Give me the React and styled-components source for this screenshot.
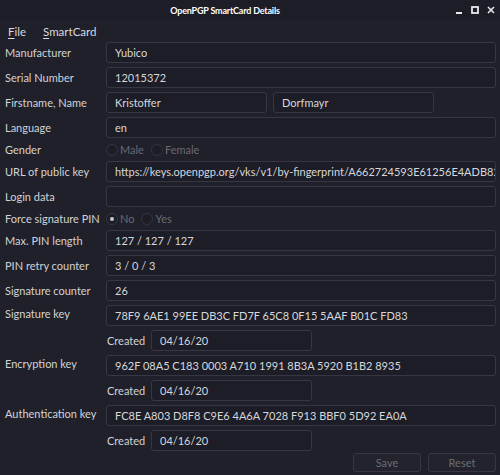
import React from "react";
import styled, { createGlobalStyle } from "styled-components";

const Global = createGlobalStyle`
  html, body { margin: 0; padding: 0; background: #1f2029; }
  body { font-family: "Lato", "Noto Sans", sans-serif; }
  * { box-sizing: border-box; }
`;

const Window = styled.div`
  width: 500px;
  height: 475px;
  background: #1f2029;
  color: #d2d3d8;
  font-family: "Lato", "Noto Sans", sans-serif;
  font-size: 11px;
  display: flex;
  flex-direction: column;
  overflow: hidden;
`;

const TitleBar = styled.div`
  height: 20px;
  background: #1c1d26;
  display: flex;
  align-items: center;
`;

const Title = styled.div`
  flex: 1;
  text-align: center;
  font-weight: 700;
  font-size: 9px;
  letter-spacing: -0.2px;
  color: #ffffff;
`;

const Controls = styled.div`
  width: 50px;
  height: 20px;
  display: flex;
  align-items: center;
  justify-content: flex-end;
  padding-right: 4px;
  gap: 6px;
`;

const MenuBar = styled.div`
  height: 22px;
  display: flex;
  align-items: center;
  gap: 17px;
  padding-left: 8px;
  font-size: 11.5px;
  color: #d8d9de;
`;

const MenuItem = styled.span`
  & u { text-decoration: underline; text-underline-offset: 2px; }
`;

const Form = styled.div`
  display: grid;
  grid-template-columns: 101px 1fr;
  row-gap: 4px;
  padding: 0 4px 0 5px;
`;

const Label = styled.div`
  display: flex;
  align-items: ${(p) => (p.$top ? "flex-start" : "center")};
  padding-top: ${(p) => (p.$top ? "2px" : "0")};
  white-space: nowrap;
  color: #d2d3d8;
  height: ${(p) => (p.$short ? "15px" : "auto")};
`;

const Field = styled.div`
  height: 21px;
  flex: none;
  border: 1px solid #363743;
  border-radius: 3px;
  background: #1c1d26;
  padding: 0 8px;
  display: flex;
  align-items: center;
  white-space: nowrap;
  overflow: hidden;
  color: #d6d7dc;
  width: ${(p) => (p.$w ? `${p.$w}px` : "auto")};
`;

const Row = styled.div`
  display: flex;
  align-items: center;
  gap: ${(p) => p.$gap || 6}px;
`;

const Stack = styled.div`
  display: flex;
  flex-direction: column;
  gap: 4px;
`;

const RadioRow = styled.div`
  height: 15px;
  display: flex;
  align-items: center;
  gap: 7px;
`;

const RadioItem = styled.span`
  display: inline-flex;
  align-items: center;
  gap: 2px;
  color: #696a74;
`;

const Circle = styled.span`
  width: 12px;
  height: 12px;
  border-radius: 50%;
  border: 1px solid #34353f;
  background: #1c1d26;
  display: inline-flex;
  align-items: center;
  justify-content: center;
  &::after {
    content: "";
    width: 4px;
    height: 4px;
    border-radius: 50%;
    background: ${(p) => (p.$on ? "#c8c9ce" : "transparent")};
  }
`;

const SubLabel = styled.span`
  width: 40px;
  padding-left: 1px;
  color: #d2d3d8;
`;

const Footer = styled.div`
  display: flex;
  justify-content: flex-end;
  gap: 7px;
  padding: 2px 4px 0 0;
`;

const Button = styled.button`
  width: 68px;
  height: 19px;
  border: 1px solid #363743;
  border-radius: 3px;
  background: #22232d;
  color: #6c6d77;
  font-family: inherit;
  font-size: 11px;
  padding: 0;
`;

const Radio = ({ on, children }) => (
  <RadioItem>
    <Circle $on={on} />
    {children}
  </RadioItem>
);

const KeyBlock = ({ label, fp }) => (
  <>
    <Label $top>{label}</Label>
    <Stack>
      <Field>{fp}</Field>
      <Row $gap={5}>
        <SubLabel>Created</SubLabel>
        <Field $w={161}>04/16/20</Field>
      </Row>
    </Stack>
  </>
);

export default function App() {
  return (
    <Window>
      <Global />
      <TitleBar>
        <Title>OpenPGP SmartCard Details</Title>
        <Controls>
          <svg width="10" height="10" viewBox="0 0 10 10">
            <rect x="2" y="7" width="6" height="2" fill="#e8e8ec" />
          </svg>
          <svg width="10" height="10" viewBox="0 0 10 10">
            <rect x="2" y="2" width="6" height="6" fill="none" stroke="#e8e8ec" strokeWidth="1.8" />
          </svg>
          <svg width="10" height="10" viewBox="0 0 10 10">
            <path d="M2 2 L8 8 M8 2 L2 8" stroke="#e8e8ec" strokeWidth="1.6" />
          </svg>
        </Controls>
      </TitleBar>
      <MenuBar>
        <MenuItem><u>F</u>ile</MenuItem>
        <MenuItem><u>S</u>martCard</MenuItem>
      </MenuBar>
      <Form>
        <Label>Manufacturer</Label>
        <Field>Yubico</Field>

        <Label>Serial Number</Label>
        <Field>12015372</Field>

        <Label>Firstname, Name</Label>
        <Row>
          <Field $w={161}>Kristoffer</Field>
          <Field $w={161}>Dorfmayr</Field>
        </Row>

        <Label>Language</Label>
        <Field>en</Field>

        <Label $short>Gender</Label>
        <RadioRow>
          <Radio>Male</Radio>
          <Radio>Female</Radio>
        </RadioRow>

        <Label>URL of public key</Label>
        <Field>https://keys.openpgp.org/vks/v1/by-fingerprint/A662724593E61256E4ADB82B0DA1E51A7F8E</Field>

        <Label>Login data</Label>
        <Field />

        <Label $short>Force signature PIN</Label>
        <RadioRow>
          <Radio on>No</Radio>
          <Radio>Yes</Radio>
        </RadioRow>

        <Label>Max. PIN length</Label>
        <Field>127 / 127 / 127</Field>

        <Label>PIN retry counter</Label>
        <Field>3 / 0 / 3</Field>

        <Label>Signature counter</Label>
        <Field>26</Field>

        <KeyBlock label="Signature key" fp="78F9 6AE1 99EE DB3C FD7F 65C8 0F15 5AAF B01C FD83" />
        <KeyBlock label="Encryption key" fp="962F 08A5 C183 0003 A710 1991 8B3A 5920 B1B2 8935" />
        <KeyBlock label="Authentication key" fp="FC8E A803 D8F8 C9E6 4A6A 7028 F913 BBF0 5D92 EA0A" />
      </Form>
      <Footer>
        <Button disabled>Save</Button>
        <Button disabled>Reset</Button>
      </Footer>
    </Window>
  );
}
